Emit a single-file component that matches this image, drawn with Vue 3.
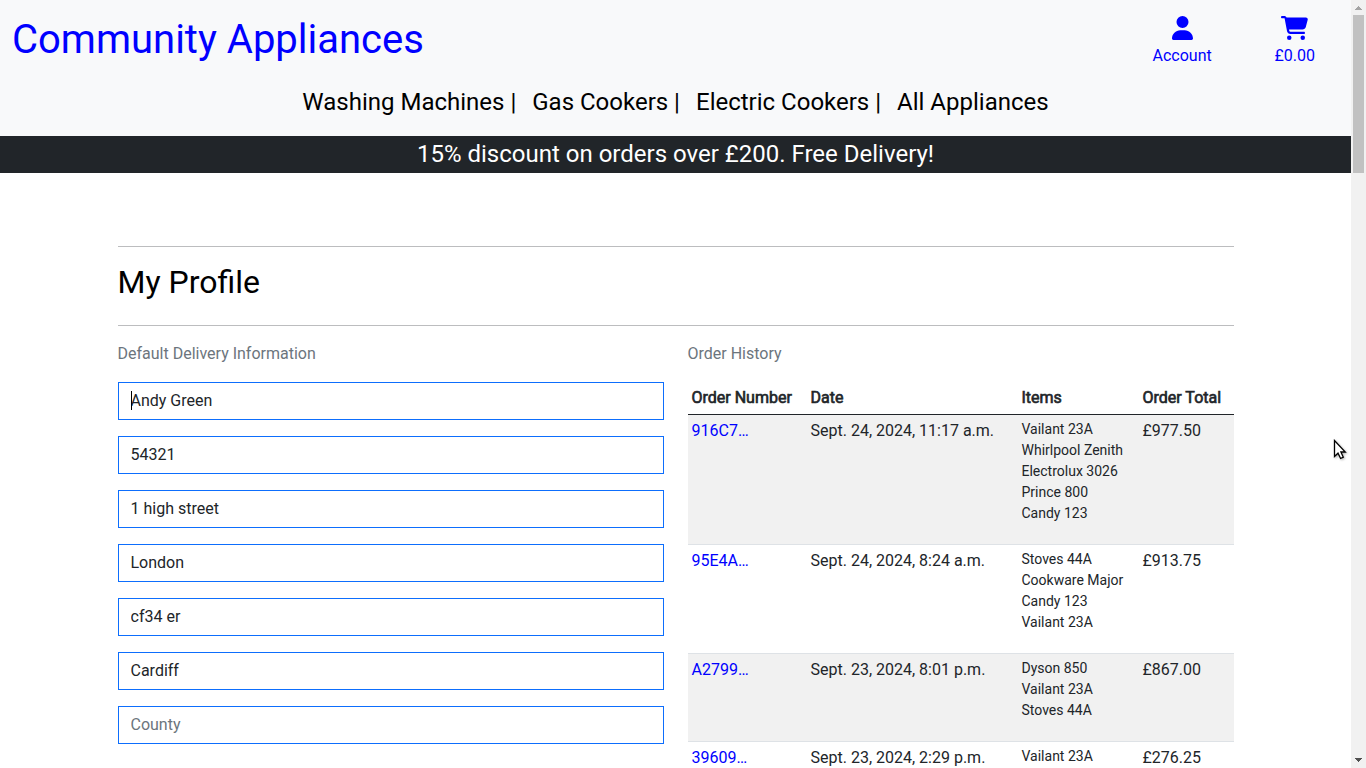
<script setup>
import { reactive } from 'vue'

const categories = ['Washing Machines |', 'Gas Cookers |', 'Electric Cookers |', 'All Appliances']

const fields = reactive([
  { id: 'full_name', label: 'Full Name', value: 'Andy Green' },
  { id: 'phone_number', label: 'Phone Number', value: '54321' },
  { id: 'street_address1', label: 'Street Address 1', value: '1 high street' },
  { id: 'street_address2', label: 'Street Address 2', value: 'London' },
  { id: 'postcode', label: 'Postcode', value: 'cf34 er' },
  { id: 'town_or_city', label: 'Town or City', value: 'Cardiff' },
  { id: 'county', label: 'County', value: '' }
])

const orders = [
  { number: '916C7…', date: 'Sept. 24, 2024, 11:17 a.m.', items: ['Vailant 23A', 'Whirlpool Zenith', 'Electrolux 3026', 'Prince 800', 'Candy 123'], total: '£977.50' },
  { number: '95E4A…', date: 'Sept. 24, 2024, 8:24 a.m.', items: ['Stoves 44A', 'Cookware Major', 'Candy 123', 'Vailant 23A'], total: '£913.75' },
  { number: 'A2799…', date: 'Sept. 23, 2024, 8:01 p.m.', items: ['Dyson 850', 'Vailant 23A', 'Stoves 44A'], total: '£867.00' },
  { number: '39609…', date: 'Sept. 23, 2024, 2:29 p.m.', items: ['Vailant 23A'], total: '£276.25' }
]
</script>

<template>
  <div class="window">
    <div class="page">
      <header class="site-header">
        <div class="top-row">
          <h1 class="brand"><a href="#">Community Appliances</a></h1>
          <a class="action" href="#">
            <svg class="icon-user" viewBox="0 0 448 512" aria-hidden="true">
              <path d="M224 256A128 128 0 1 0 224 0a128 128 0 1 0 0 256zm-45.700 48C79.800 304 0 383.800 0 482.300C0 498.700 13.300 512 29.700 512H418.300c16.400 0 29.700-13.300 29.700-29.700C448 383.800 368.200 304 269.700 304H178.300z" />
            </svg>
            <span>Account</span>
          </a>
          <a class="action" href="#">
            <svg class="icon-cart" viewBox="0 0 576 512" aria-hidden="true">
              <path d="M0 24C0 10.700 10.700 0 24 0H69.500c22 0 41.500 12.800 50.600 32h411c26.300 0 45.500 25 38.600 50.400l-41 152.300c-8.500 31.400-37 53.300-69.500 53.300H170.700l5.400 28.500c2.200 11.300 12.100 19.500 23.600 19.500H488c13.300 0 24 10.700 24 24s-10.700 24-24 24H199.700c-34.600 0-64.300-24.600-70.700-58.500L77.400 54.500c-.7-3.800-4-6.500-7.900-6.500H24C10.700 48 0 37.300 0 24zM128 464a48 48 0 1 1 96 0 48 48 0 1 1 -96 0zm336-48a48 48 0 1 1 0 96 48 48 0 1 1 0-96z" />
            </svg>
            <span>£0.00</span>
          </a>
        </div>
        <nav class="categories">
          <a v-for="name in categories" :key="name" href="#">{{ name }}</a>
        </nav>
      </header>

      <div class="banner">15% discount on orders over £200. Free Delivery!</div>

      <main class="container">
        <hr />
        <h2>My Profile</h2>
        <hr />
        <div class="columns">
          <form class="delivery" @submit.prevent>
            <p class="muted">Default Delivery Information</p>
            <div v-for="(field, i) in fields" :key="field.id" class="field">
              <input :id="field.id" v-model="field.value" type="text" :placeholder="field.label" :aria-label="field.label" />
              <span v-if="i === 0" class="caret"></span>
            </div>
          </form>
          <section class="history">
            <p class="muted">Order History</p>
            <table>
              <colgroup>
                <col class="col-number" />
                <col class="col-date" />
                <col class="col-items" />
                <col class="col-total" />
              </colgroup>
              <thead>
                <tr>
                  <th scope="col">Order Number</th>
                  <th scope="col">Date</th>
                  <th scope="col">Items</th>
                  <th scope="col">Order Total</th>
                </tr>
              </thead>
              <tbody>
                <tr v-for="order in orders" :key="order.number">
                  <td><a href="#">{{ order.number }}</a></td>
                  <td>{{ order.date }}</td>
                  <td>
                    <ul>
                      <li v-for="item in order.items" :key="item">{{ item }}</li>
                    </ul>
                  </td>
                  <td>{{ order.total }}</td>
                </tr>
              </tbody>
            </table>
          </section>
        </div>
      </main>
    </div>

    <div class="scrollbar" aria-hidden="true">
      <svg viewBox="0 0 15 15" class="arrow-up"><path d="M4 10h7v-1h-1v-1h-1v-1h-1v-1h-1v1h-1v1h-1v1h-1z" /></svg>
      <div class="track"><div class="thumb"></div></div>
      <svg viewBox="0 0 15 15" class="arrow-down"><path d="M4 5h7v1h-1v1h-1v1h-1v1h-1v-1h-1v-1h-1v-1h-1z" /></svg>
    </div>

    <svg class="pointer" viewBox="0 0 14 22" aria-hidden="true">
      <path d="M1.500 1.500V17.500L5 14.200L7.600 19.500L10.300 18.200L7.900 13H12.300z" />
    </svg>
  </div>
</template>

<style>
body {
  margin: 0;
  background: #fff;
}
</style>

<style scoped>
* {
  box-sizing: border-box;
}

.window {
  position: relative;
  display: flex;
  height: 100vh;
  overflow: hidden;
  font-family: Roboto, "Liberation Sans", sans-serif;
  font-size: 16px;
  line-height: 24px;
  color: #212529;
}

.page {
  flex: 1;
  min-width: 0;
  overflow: hidden;
}

a {
  color: #00f;
  text-decoration: none;
}

.site-header {
  background: #f8f9fa;
}

.top-row {
  display: grid;
  grid-template-columns: 10fr 1fr 1fr;
  height: 84px;
}

.brand {
  margin: 0;
  padding: 16px 12px 0;
  font-size: 40px;
  font-weight: 400;
  line-height: 48px;
}

.action {
  display: flex;
  flex-direction: column;
  align-items: center;
  gap: 4px;
  padding-top: 16px;
}

.action svg {
  height: 24px;
  fill: #00f;
}

.icon-user {
  width: 21px;
}

.icon-cart {
  width: 27px;
}

.categories {
  display: flex;
  justify-content: center;
  gap: 16px;
  padding-bottom: 16px;
  font-size: 24px;
  line-height: 36px;
}

.categories a {
  color: #000;
}

.banner {
  padding-bottom: 1px;
  background: #212529;
  color: #fff;
  font-size: 24px;
  line-height: 36px;
  text-align: center;
}

.container {
  max-width: 1140px;
  margin: 0 auto;
  padding: 73px 12px 0;
}

hr {
  height: 1px;
  margin: 0;
  border: 0;
  background: #bcbdbf;
}

h2 {
  margin: 16px 0 24px;
  color: #000;
  font-size: 32px;
  font-weight: 400;
  line-height: 38px;
}

.columns {
  display: grid;
  grid-template-columns: 1fr 1fr;
  gap: 24px;
  padding-top: 16px;
}

.muted {
  margin: 0 0 16px;
  color: #6c757d;
}

.field {
  position: relative;
  margin-bottom: 16px;
}

.field input {
  display: block;
  width: 100%;
  height: 38px;
  padding: 5px 12px 7px;
  border: 1px solid #0d6efd;
  border-radius: 0;
  outline: 0;
  background: #fff;
  color: #212529;
  font: inherit;
}

.field input::placeholder {
  color: #6c757d;
  opacity: 1;
}

.caret {
  position: absolute;
  top: 9px;
  left: 13px;
  width: 1px;
  height: 19px;
  background: #000;
}

table {
  width: 100%;
  table-layout: fixed;
  border-collapse: collapse;
}

.col-number {
  width: 119px;
}

.col-date {
  width: 211px;
}

.col-items {
  width: 121px;
}

.col-total {
  width: 95px;
}

th,
td {
  padding: 4px;
  border-bottom: 1px solid #dee2e6;
  text-align: left;
  vertical-align: top;
  white-space: nowrap;
}

th {
  border-bottom-color: #212529;
  font-weight: 400;
  -webkit-text-stroke: 0.04em #212529;
}

tbody tr:nth-child(odd) {
  background: #f1f1f1;
}

ul {
  margin: 0 0 16px;
  padding: 0;
  list-style: none;
  font-size: 14px;
  line-height: 21px;
}

.scrollbar {
  display: flex;
  flex-direction: column;
  width: 15px;
  background: #f1f1f1;
}

.scrollbar svg {
  width: 15px;
  height: 15px;
}

.arrow-up {
  fill: #a3a3a3;
}

.arrow-down {
  fill: #505050;
}

.track {
  flex: 1;
  padding: 0 2px;
}

.thumb {
  height: 158px;
  background: #c1c1c1;
}

.pointer {
  position: absolute;
  top: 439px;
  left: 1333px;
  width: 14px;
  height: 22px;
  fill: #fff;
  stroke: #000;
  stroke-width: 1.3;
  filter: drop-shadow(1px 1px 1px rgba(0, 0, 0, 0.3));
}
</style>
